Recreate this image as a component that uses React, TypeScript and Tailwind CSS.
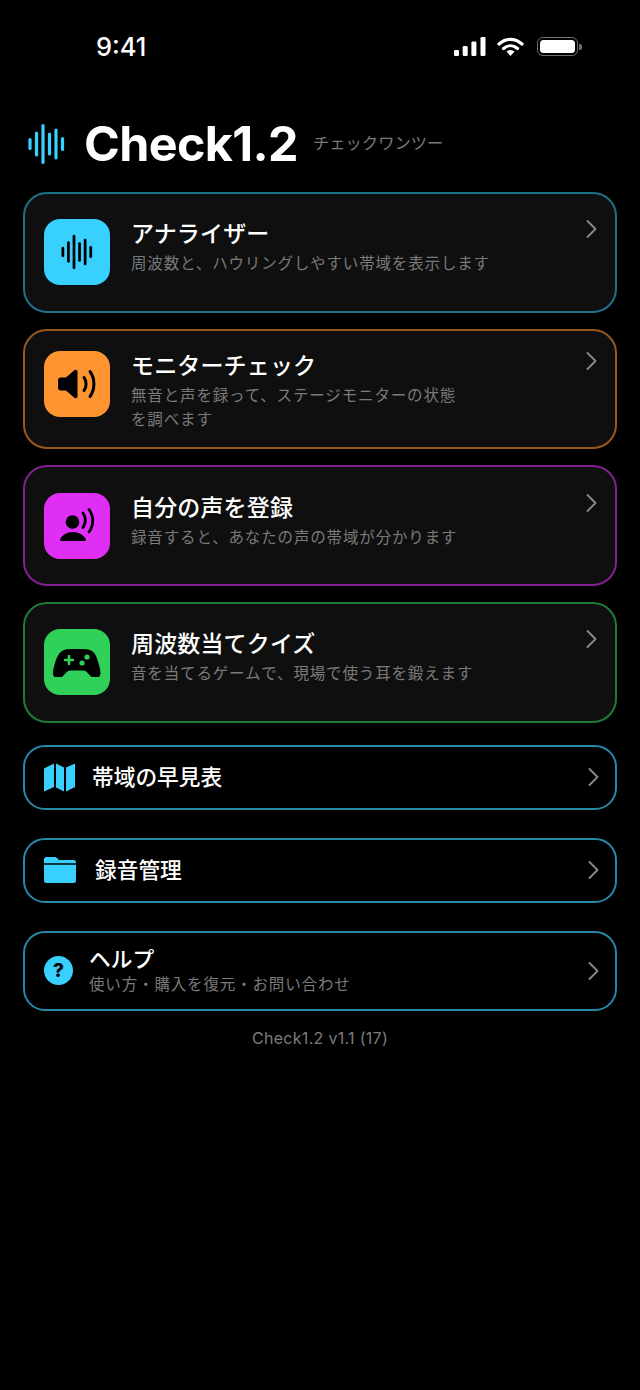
import type { ReactNode } from 'react'

const fontStack = "font-['Inter','Noto_Sans_CJK_JP',sans-serif]"

const waveBars = [
  { x: 1.5, h: 12 },
  { x: 8, h: 25 },
  { x: 14.5, h: 40 },
  { x: 21, h: 23 },
  { x: 27.5, h: 31 },
  { x: 34, h: 14 },
]

function Wave({ className }: { className: string }) {
  return (
    <svg viewBox="0 0 36 42" className={className} fill="currentColor">
      {waveBars.map((bar) => (
        <rect key={bar.x} x={bar.x - 1.6} y={21 - bar.h / 2} width="3.2" height={bar.h} rx="1.6" />
      ))}
    </svg>
  )
}

function Speaker() {
  return (
    <svg viewBox="0 0 38 32" className="h-[32px] w-[38px]" fill="none">
      <path d="M3 9.5h5L16 2.5c1.6-1.3 3.5-.7 3.5 1.6v23.8c0 2.3-1.9 2.9-3.5 1.6L8 22.5H3a3 3 0 0 1-3-3v-7a3 3 0 0 1 3-3Z" fill="#000" />
      <path d="M26 9.500c2.800 3.800 2.800 9.200 0 13" stroke="#000" strokeWidth="3" strokeLinecap="round" />
      <path d="M32 3.500c5.200 7 5.200 18 0 25" stroke="#000" strokeWidth="3" strokeLinecap="round" />
    </svg>
  )
}

function VoicePerson() {
  return (
    <svg viewBox="0 0 38 36" className="h-[36px] w-[38px]" fill="none">
      <circle cx="14.5" cy="14" r="6.8" fill="#000" />
      <path d="M3.300 33c-1.200 0-1.600-1-1-2.200C4.400 27 9 24 15 24s10.400 3 12.700 6.800c.6 1.200.2 2.200-1 2.200H3.300Z" fill="#000" />
      <path d="M25 5c3 4.500 3 10 0 14.500" stroke="#000" strokeWidth="2.800" strokeLinecap="round" />
      <path d="M31 1.500c5 6.500 5 16 0 22.500" stroke="#000" strokeWidth="2.800" strokeLinecap="round" />
    </svg>
  )
}

function Gamepad() {
  return (
    <svg viewBox="0 -1.500 48 30" className="h-[30px] w-[48px]">
      <path
        d="M11 1.500C13 .7 17 .5 24 .5s11 .2 13 1c3.500 1.300 5.500 4 7 8.500 1.700 5 3.500 10.500 3.500 14.500 0 3.500-2.200 5.300-5 5.300-3.300 0-5.300-2.500-7.500-5-1.500-1.700-2.500-2.800-5-2.800H17.500c-2.500 0-3.500 1.100-5 2.800-2.200 2.500-4.200 5-7.500 5-2.800 0-5-1.800-5-5.300 0-4 1.800-9.500 3.500-14.500C5.500 5.500 7.500 2.800 11 1.500Z"
        fill="#000"
      />
      <path d="M16 7.500v8M12 11.500h8" stroke="#30d158" strokeWidth="2.600" strokeLinecap="round" />
      <circle cx="34" cy="8.500" r="2.600" fill="#30d158" />
      <circle cx="29" cy="14.500" r="2.600" fill="#30d158" />
    </svg>
  )
}

function MapIcon() {
  return (
    <svg viewBox="0 0 31 29" className="h-[29px] w-[31px]" fill="#38d0ff">
      <path d="M0 5.500 10 .5v23.500L0 28.500Z" />
      <path d="M12 .5 20 4.500v24l-8-4Z" />
      <path d="M22 4.500 31 .5v23.500l-9 4.500Z" />
    </svg>
  )
}

function FolderIcon() {
  return (
    <svg viewBox="0 0 32 26" className="h-[26px] w-[32px]" fill="#38d0ff">
      <path d="M2.500 0h8c1.200 0 1.900.4 2.700 1.200L15 3h14.500A2.500 2.500 0 0 1 32 5.500V6.200H0V2.500A2.500 2.500 0 0 1 2.500 0Z" />
      <path d="M0 7.800h32v15.700a2.500 2.500 0 0 1-2.500 2.500h-27A2.500 2.500 0 0 1 0 23.500Z" />
    </svg>
  )
}

function Chevron() {
  return (
    <svg viewBox="0 0 11 18" className="h-[18px] w-[11px] shrink-0" fill="none">
      <path d="M1.500 1l8 8-8 8" stroke="#8a8a8a" strokeWidth="1.800" strokeLinecap="round" strokeLinejoin="round" />
    </svg>
  )
}

function StatusIcons() {
  return (
    <div className="flex items-center gap-[11px]">
      <svg viewBox="0 0 32 19" className="h-[19px] w-[32px]" fill="#fff">
        <rect x="0" y="13" width="5" height="6" rx="1.200" />
        <rect x="8.700" y="9" width="5" height="10" rx="1.200" />
        <rect x="17.400" y="4.500" width="5" height="14.500" rx="1.200" />
        <rect x="26.500" y="0" width="5" height="19" rx="1.200" />
      </svg>
      <svg viewBox="0 0 27 19" className="h-[19px] w-[27px]" fill="none">
        <path d="M2 7C9 .7 18 .7 25 7" stroke="#fff" strokeWidth="3.200" strokeLinecap="round" />
        <path d="M6.500 11.500c4.200-3.700 9.800-3.700 14 0" stroke="#fff" strokeWidth="3.200" strokeLinecap="round" />
        <path d="M9.500 14.500c2.500-2 5.500-2 8 0L13.500 19Z" fill="#fff" />
      </svg>
      <div className="ml-[2px] flex items-center gap-[1px]">
        <div className="h-[19px] w-[41px] rounded-[6px] border-[1.500px] border-[#6e6e6e] p-[2px]">
          <div className="h-full w-full rounded-[3.500px] bg-white" />
        </div>
        <div className="h-[6px] w-[3px] rounded-r-[2px] bg-[#6e6e6e]" />
      </div>
    </div>
  )
}

type FeatureCardProps = {
  title: string
  text: ReactNode
  tile: string
  border: string
  top: string
  icon: ReactNode
}

function FeatureCard({ title, text, tile, border, top, icon }: FeatureCardProps) {
  return (
    <div className={`flex h-[120.670px] items-start rounded-[24px] border-2 bg-[#0f0f0f] pl-[19px] pr-[18.500px] ${top} ${border}`}>
      <div className={`flex h-[66px] w-[66px] shrink-0 items-center justify-center rounded-[16px] ${tile}`}>
        {icon}
      </div>
      <div className="ml-[21px] flex-1 pt-[1px]">
        <div className="text-[23px] font-medium leading-[28px] tracking-[0.15px] text-white">{title}</div>
        <div className="mt-[4px] whitespace-nowrap text-[15.500px] leading-[24px] tracking-[0.85px] text-[#7a7a7a]">{text}</div>
      </div>
      <div className="mt-[1px]">
        <Chevron />
      </div>
    </div>
  )
}

function LinkRow({ icon, gap, title }: { icon: ReactNode; gap: string; title: string }) {
  return (
    <div className="flex h-[65px] items-center rounded-[22px] border-2 border-[#2689a9] pl-[19px] pr-[16px]">
      {icon}
      <div className={`flex-1 text-[21.700px] font-medium text-white ${gap}`}>{title}</div>
      <Chevron />
    </div>
  )
}

export default function App() {
  return (
    <div className={`min-h-[1390px] bg-black px-[23px] ${fontStack}`}>
      <div className="flex h-[96px] items-start justify-between pl-[73px] pr-[35px] pt-[32px]">
        <span className="text-[25.500px] font-medium leading-[30px] text-white">9:41</span>
        <div className="pt-[5px]">
          <StatusIcons />
        </div>
      </div>

      <div className="flex h-[96px] items-center pb-[1px]">
        <Wave className="ml-[5px] h-[42px] w-[37px] text-[#38d0ff]" />
        <span className="ml-[19px] mt-[2px] text-[48.400px] font-bold leading-none tracking-[-0.6px] text-white">Check1.2</span>
        <span className="mb-[1px] ml-[15px] text-[16.300px] text-[#7a7a7a]">チェックワンツー</span>
      </div>

      <div className="flex flex-col gap-[16px]">
        <FeatureCard
          title="アナライザー"
          text="周波数と、ハウリングしやすい帯域を表示します"
          tile="bg-[#38d0ff]"
          border="border-[#1f7188]"
          top="pt-[25px]"
          icon={<Wave className="h-[36px] w-[32px] text-black" />}
        />
        <FeatureCard
          title="モニターチェック"
          text={
            <>
              無音と声を録って、ステージモニターの状態
              <br />
              を調べます
            </>
          }
          tile="bg-[#ff9530]"
          border="border-[#965a1f]"
          top="pt-[20px]"
          icon={<Speaker />}
        />
        <FeatureCard
          title="自分の声を登録"
          text="録音すると、あなたの声の帯域が分かります"
          tile="bg-[#df2ff5]"
          border="border-[#832091]"
          top="pt-[25.700px]"
          icon={<VoicePerson />}
        />
        <FeatureCard
          title="周波数当てクイズ"
          text="音を当てるゲームで、現場で使う耳を鍛えます"
          tile="bg-[#30d158]"
          border="border-[#1f7a37]"
          top="pt-[25px]"
          icon={<Gamepad />}
        />
      </div>

      <div className="mt-[22px] flex flex-col gap-[28px]">
        <LinkRow icon={<MapIcon />} gap="ml-[17px]" title="帯域の早見表" />
        <LinkRow icon={<FolderIcon />} gap="ml-[19px]" title="録音管理" />
        <div className="flex h-[80px] items-center rounded-[22px] border-2 border-[#2689a9] pb-[-1px] pl-[19px] pr-[16px]">
          <div className="flex h-[29px] w-[29px] shrink-0 items-center justify-center rounded-full bg-[#38d0ff] text-[19px] font-extrabold leading-none text-black">
            ?
          </div>
          <div className="ml-[16px] flex-1 pt-[2px]">
            <div className="text-[21.700px] font-medium leading-[26px] text-white">ヘルプ</div>
            <div className="pt-[1px] text-[15.500px] leading-[24px] tracking-[0.85px] text-[#7a7a7a]">使い方・購入を復元・お問い合わせ</div>
          </div>
          <Chevron />
        </div>
      </div>

      <div className="mt-[16px] text-center text-[16px] leading-[22px] tracking-[0.3px] text-[#7c7c7c]">Check1.2 v1.1 (17)</div>
    </div>
  )
}
